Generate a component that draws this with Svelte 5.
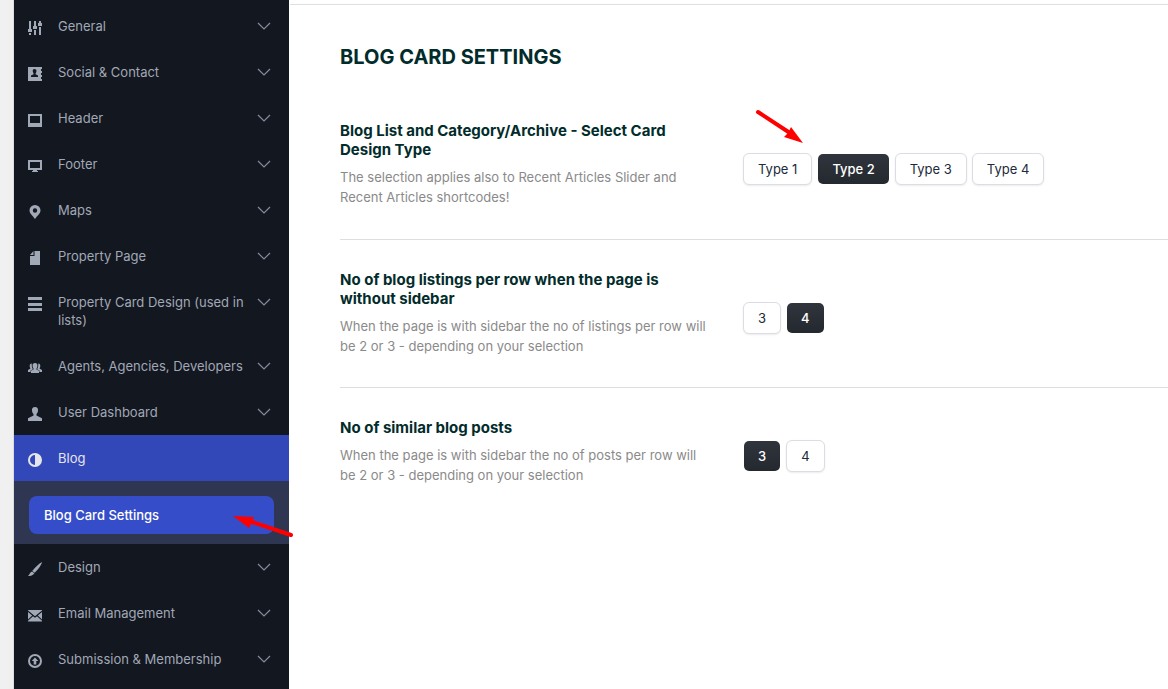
<script>
	const menu = [
		{ label: 'General', icon: 'sliders' },
		{ label: 'Social & Contact', icon: 'contact' },
		{ label: 'Header', icon: 'header' },
		{ label: 'Footer', icon: 'monitor' },
		{ label: 'Maps', icon: 'pin' },
		{ label: 'Property Page', icon: 'page' },
		{ label: 'Property Card Design (used in lists)', icon: 'lines' },
		{ label: 'Agents, Agencies, Developers', icon: 'group' },
		{ label: 'User Dashboard', icon: 'user' },
		{ label: 'Blog', icon: 'adjust', children: ['Blog Card Settings'] },
		{ label: 'Design', icon: 'brush' },
		{ label: 'Email Management', icon: 'mail' },
		{ label: 'Submission & Membership', icon: 'upload' }
	];

	// 14 x 14 glyphs
	const icons = {
		sliders: 'M1 0h2v8h1v3H0V8h1zM1 12h2v2H1zM6 0h2v5h1v3H5V5h1zM6 9h2v5H6zM11 0h2v2h1v3h-4V2h1zM11 6h2v8h-2z',
		contact: 'M0 0h14v2h-1v2h1v2h-1v2h1v2h-1v2h1v2H0zM6.500 2C5 2 4.500 3 4.800 4.500c.1.900.5 1.300.8 1.700v1L3 8.500V10h7V8.500L7.600 7.200v-1c.4-.4.700-.8.8-1.700C8.700 3 8 2 6.500 2z',
		header: 'M0 1h14v13H0zM2 3v7h10V3z',
		monitor: 'M0 1h14v10H9v1h1v1H4v-1h1v-1H0zM2 3v6h10V3z',
		pin: 'M7 0a5.500 5.500 0 0 1 5.500 5.500C12.500 8.500 9 11 7 14 5 11 1.500 8.500 1.500 5.500A5.500 5.500 0 0 1 7 0zM7 3.300a2.200 2.200 0 1 0 0 4.400 2.200 2.200 0 0 0 0-4.400z',
		page: 'M6.500 0H12v14H2V5h4.500zM5.500 0v4H2z',
		lines: 'M0 0h14v3H0zM0 6h14v3H0zM0 11h14v3H0z',
		group: 'M7 2c2 0 2.700 1.300 2.400 3.200C9.200 6.500 8.600 7 8.500 7.500v1l2.500 1.300V12H3V9.800l2.500-1.300v-1C5.400 7 4.800 6.500 4.600 5.200 4.300 3.300 5 2 7 2zM3.800 2.500C2 2.500 1.400 4.200 1.800 6c.2.700.6 1.100.7 1.500L0 9v2h2.600V9.500l2.300-1.300C3.800 6.500 3.600 4.500 3.800 2.500zM10.200 2.500c1.800 0 2.400 1.700 2 3.500-.2.700-.6 1.100-.7 1.500L14 9v2h-2.600V9.500L9.100 8.200c1.100-1.700 1.300-3.700 1.100-5.700z',
		user: 'M7 0c2.300 0 3.300 1.400 3 3.800-.2 1.700-.8 2.600-1.500 3.300v1.500L14 11.300V14H0v-2.700l5.500-2.700V7.100C4.800 6.400 4.200 5.500 4 3.800 3.700 1.400 4.700 0 7 0z',
		adjust: 'M7 0a7 7 0 1 1 0 14A7 7 0 0 1 7 0zM7 2a5 5 0 0 0 0 10z',
		brush: 'M14 0c-.2 2-2.800 6.200-7.200 10.800L4.200 9C7.300 5.300 11 1.700 14 0zM3.900 9.400l2.500 1.800C5.200 13.200 2.500 14 0 14c1.500-1.200 1.600-3.500 3.900-4.600z',
		mail: 'M0 2h14v.6L7 8.200 0 2.600zM0 4l4.200 3.500L0 11.500zM14 4v7.500L9.800 7.500zM5 8.200l2 1.600 2-1.600 5 4.500v.8H0v-.8z',
		upload: 'M7 0a7 7 0 1 1 0 14A7 7 0 0 1 7 0zM7 2a5 5 0 1 0 0 10A5 5 0 0 0 7 2zM7 3.500l3.300 3.500H8.300v3.500H5.700V7H3.700z'
	};

	let settings = $state([
		{
			title: 'Blog List and Category/Archive - Select Card Design Type',
			text: 'The selection applies also to Recent Articles Slider and Recent Articles shortcodes!',
			options: ['Type 1', 'Type 2', 'Type 3', 'Type 4'],
			value: 'Type 2',
			arrow: true
		},
		{
			title: 'No of blog listings per row when the page is without sidebar',
			text: 'When the page is with sidebar the no of listings per row will be 2 or 3 - depending on your selection',
			options: ['3', '4'],
			value: '4'
		},
		{
			title: 'No of similar blog posts',
			text: 'When the page is with sidebar the no of posts per row will be 2 or 3 - depending on your selection',
			options: ['3', '4'],
			value: '3'
		}
	]);
</script>

<div class="page">
	<nav class="sidebar">
		<ul>
			{#each menu as item}
				<li>
					<button class="item" class:active={item.children}>
						<svg class="icon" viewBox="0 0 14 14" aria-hidden="true">
							<path fill-rule="evenodd" d={icons[item.icon]} />
						</svg>
						<span>{item.label}</span>
						{#if !item.children}
							<svg class="chevron" viewBox="0 0 14 8" aria-hidden="true">
								<path d="M1 1l6 6 6-6" />
							</svg>
						{/if}
					</button>
					{#if item.children}
						<div class="submenu">
							{#each item.children as child}
								<a href="#blog-card">{child}</a>
							{/each}
							<svg class="arrow-left" viewBox="0 0 62 26" aria-hidden="true">
								<path class="shaft" d="M58 22L16 8" />
								<path class="head" d="M0 3l21 1-2 5-3 6z" />
							</svg>
						</div>
					{/if}
				</li>
			{/each}
		</ul>
	</nav>

	<main>
		<h1>BLOG CARD SETTINGS</h1>
		{#each settings as setting, i}
			<section>
				<div class="info">
					<h2 id="setting-{i}">{setting.title}</h2>
					<p>{setting.text}</p>
				</div>
				<div class="options" role="group" aria-labelledby="setting-{i}">
					{#each setting.options as option}
						<button
							class="option"
							class:selected={setting.value === option}
							aria-pressed={setting.value === option}
							onclick={() => (setting.value = option)}
						>{option}</button>
					{/each}
					{#if setting.arrow}
						<svg class="arrow-down" viewBox="0 0 48 34" aria-hidden="true">
							<path class="shaft" d="M3 3l32 21" />
							<path class="head" d="M48 34l-19-6 4-4 3-6z" />
						</svg>
					{/if}
				</div>
			</section>
		{/each}
	</main>
</div>

<style>
	:global(body) {
		background: #fff;
	}

	.page {
		display: flex;
		min-height: 100vh;
		box-sizing: border-box;
		border-left: 13px solid #f0f0f1;
		font-family: Inter, sans-serif;
	}

	.sidebar {
		flex: 0 0 275px;
		padding-top: 3px;
		border-left: 1px solid #dcdcde;
		background: #131720;
	}

	ul {
		list-style: none;
		margin: 0;
		padding: 0;
	}

	button {
		font-family: inherit;
		cursor: pointer;
	}

	.item {
		display: flex;
		align-items: flex-start;
		gap: 16px;
		width: 100%;
		padding: 14px 18px 14px 14px;
		border: 0;
		background: none;
		color: #a1a8b6;
		font-size: 13px;
		line-height: 18px;
		text-align: left;
	}

	.item span {
		flex: 1;
		margin-right: -6px;
	}

	.item.active {
		background: #3348b8;
		color: #e4e6ec;
	}

	.icon {
		flex: none;
		width: 14px;
		height: 14px;
		margin-top: 4px;
		fill: currentColor;
	}

	.chevron {
		flex: none;
		width: 14px;
		height: 8px;
		margin-top: 5px;
		fill: none;
		stroke: #858c9b;
		stroke-width: 1.2;
	}

	.submenu {
		position: relative;
		padding: 15px 15px 10px;
		background: #2e3651;
	}

	.submenu a {
		display: block;
		padding: 10px 15px;
		border-radius: 8px;
		background: #354dc9;
		color: #fff;
		font-size: 13px;
		font-weight: 500;
		line-height: 18px;
		text-decoration: none;
	}

	.arrow-left {
		position: absolute;
		right: -6px;
		top: 32px;
		width: 62px;
		height: 26px;
	}

	.arrow-down {
		position: absolute;
		left: 12px;
		top: -35px;
		width: 48px;
		height: 34px;
	}

	.shaft {
		fill: none;
		stroke: #f00;
		stroke-width: 4;
		stroke-linecap: round;
	}

	.head {
		fill: #f00;
	}

	main {
		flex: 1;
		min-width: 0;
		margin: 4px 0 0 1px;
		padding-left: 50px;
		border-top: 1px solid #dcdfe3;
	}

	h1 {
		margin: 40px 0 35px;
		color: #022c2b;
		font-size: 20px;
		font-weight: 700;
		line-height: 24px;
	}

	section {
		display: grid;
		grid-template-columns: minmax(0, 403px) 1fr;
		align-items: center;
		padding: 30px 0 31px;
		border-top: 1px solid #dcdfde;
	}

	h1 + section {
		padding-top: 17px;
		padding-bottom: 32px;
		border-top: 0;
	}

	.info {
		padding-right: 30px;
	}

	h2 {
		margin: 0 0 8px;
		color: #022c2b;
		font-size: 15px;
		font-weight: 700;
		line-height: 19px;
	}

	p {
		margin: 0;
		color: #8a8a8a;
		font-size: 13px;
		line-height: 20px;
	}

	.options {
		position: relative;
		display: flex;
		flex-wrap: wrap;
		gap: 5px;
		padding-top: 9px;
	}

	.option {
		padding: 6px 14px;
		border: 1px solid #dcdce4;
		border-radius: 6px;
		background: #fff;
		box-shadow: 0 1px 2px rgba(0, 0, 0, 0.08);
		color: #212a3a;
		font-size: 13px;
		line-height: 18px;
	}

	.option.selected {
		border-color: transparent;
		background: linear-gradient(#30353d, #24282f) padding-box;
		box-shadow: none;
		color: #fff;
		font-weight: 500;
	}
</style>
